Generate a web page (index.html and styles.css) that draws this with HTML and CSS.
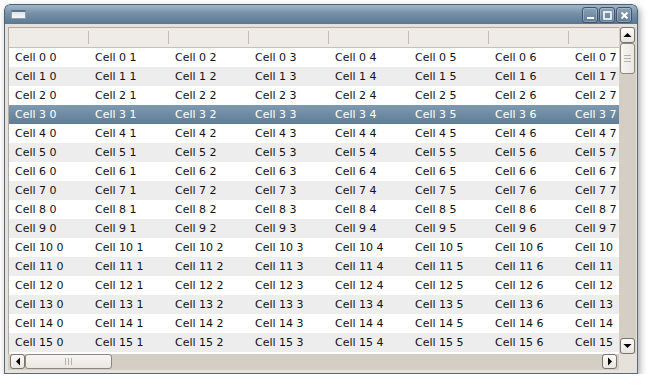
FILE: index.html
```html
<!DOCTYPE html>
<html lang="en">
<head>
  <meta charset="UTF-8" />
  <title>Table</title>
  <link rel="stylesheet" href="styles.css">
</head>
<body>

  <div class="window">
    <!-- Title bar -->
    <div class="titlebar">
      <div class="app-icon"></div>
      <div class="title-buttons">
        <div class="tbtn">
          <svg width="13" height="13" viewBox="0 0 13 13"><rect x="3" y="8" width="7" height="2" fill="#fff"/></svg>
        </div>
        <div class="tbtn">
          <svg width="13" height="13" viewBox="0 0 13 13"><rect x="3" y="3" width="7" height="7" fill="none" stroke="#fff" stroke-width="1.6"/></svg>
        </div>
        <div class="tbtn">
          <svg width="13" height="13" viewBox="0 0 13 13"><path d="M3.5 3.5 L9.5 9.5 M9.5 3.5 L3.5 9.5" stroke="#fff" stroke-width="2"/></svg>
        </div>
      </div>
    </div>

    <!-- Body -->
    <div class="frame">
      <div class="view">
        <div class="header">
          <div class="hcell"></div><div class="hcell"></div><div class="hcell"></div><div class="hcell"></div>
          <div class="hcell"></div><div class="hcell"></div><div class="hcell"></div><div class="hcell"></div>
        </div>
        <div class="rows" id="rows"></div>
      </div>

      <div class="vscroll">
        <div class="sbtn"><svg width="9" height="6" viewBox="0 0 9 6"><path d="M0.5 5 L4.5 1 L8.5 5 Z" fill="#000"/></svg></div>
        <div class="vtrack">
          <div class="vthumb"><span></span><span></span><span></span></div>
        </div>
        <div class="sbtn"><svg width="9" height="6" viewBox="0 0 9 6"><path d="M0.5 1 L4.5 5 L8.5 1 Z" fill="#000"/></svg></div>
      </div>

      <div class="hscroll">
        <div class="sbtn"><svg width="6" height="9" viewBox="0 0 6 9"><path d="M5 0.5 L1 4.5 L5 8.5 Z" fill="#000"/></svg></div>
        <div class="htrack">
          <div class="hthumb"><span></span><span></span><span></span></div>
        </div>
        <div class="sbtn"><svg width="6" height="9" viewBox="0 0 6 9"><path d="M1 0.5 L5 4.5 L1 8.5 Z" fill="#000"/></svg></div>
      </div>

      <div class="corner"></div>
    </div>
  </div>

  <script>
    // isi tabel: 16 baris x 8 kolom
    const rows = document.getElementById('rows');
    for (let r = 0; r < 16; r++) {
      let html = '<div class="row' + (r === 3 ? ' selected' : '') + '">';
      for (let c = 0; c < 8; c++) {
        html += '<div class="cell">Cell ' + r + ' ' + c + '</div>';
      }
      rows.innerHTML += html + '</div>';
    }
  </script>

</body>
</html>
```

FILE: styles.css
```css
* {
  box-sizing: border-box;
}

body {
  margin: 0;
  background: #fff;
  font-family: 'DejaVu Sans', sans-serif;
  font-size: 11px;
  color: #111;
}

.window {
  margin: 4px 0 0 4px;
  width: 634px;
  height: 370px;
  border-radius: 6px 6px 0 0;
  box-shadow: 2px 3px 7px rgba(0, 0, 0, 0.35);
  display: flex;
  flex-direction: column;
  overflow: hidden;
}

.titlebar {
  height: 20px;
  flex: none;
  display: flex;
  align-items: center;
  justify-content: space-between;
  padding: 0 5px 0 6px;
  background: linear-gradient(#a3b6c8, #7590a8 45%, #5b7893);
  border: 1px solid #4c6279;
  border-bottom: none;
  border-radius: 6px 6px 0 0;
}

.app-icon {
  width: 15px;
  height: 9px;
  background: linear-gradient(#dfe4ea, #f7f7f7);
  border: 1px solid #8c9cac;
  border-top: 2px solid #5d738a;
}

.title-buttons {
  display: flex;
  gap: 1px;
  margin-top: 1px;
}

.tbtn {
  width: 16px;
  height: 16px;
  border: 1px solid #3f556c;
  border-radius: 3px;
  background: linear-gradient(#8aa1b6, #5f7c96);
  box-shadow: inset 0 0 0 1px rgba(255, 255, 255, 0.25);
  display: flex;
  align-items: center;
  justify-content: center;
}

.frame {
  flex: 1;
  display: grid;
  grid-template-columns: 1fr 17px;
  grid-template-rows: 1fr 16px;
  padding: 3px 1px 3px 3px;
  background: #e6e1db;
  border: 1px solid #5a6a7a;
  border-top: none;
  min-height: 0;
}

.view {
  overflow: hidden;
  background: #fff;
  border-left: 1px solid #b4aba0;
  border-top: 1px solid #b4aba0;
  min-height: 0;
}

.header {
  display: flex;
  height: 20px;
  background: #efebe7;
  border-bottom: 1px solid #c9bfb3;
}

.hcell {
  flex: none;
  width: 80px;
  margin: 3px 0;
  border-right: 1px solid #c9bcad;
}

.row {
  display: flex;
  height: 19px;
  overflow: hidden;
}

.row:nth-child(even) {
  background: #ededed;
}

.row.selected {
  background: linear-gradient(#7f99ae, #5f7d97);
  color: #fff;
}

.cell {
  flex: none;
  width: 80px;
  height: 19px;
  line-height: 19px;
  padding-left: 6px;
  white-space: nowrap;
}

/* kolom terakhir terpotong oleh scrollbar, teks dibungkus */
.cell:last-child {
  width: 51px;
  white-space: normal;
  overflow: hidden;
}

/* scrollbars */
.vscroll {
  display: flex;
  flex-direction: column;
  background: #d5cec5;
  padding: 0 1px;
  grid-row: 1;
  grid-column: 2;
}

.hscroll {
  display: flex;
  background: #d5cec5;
  padding: 0 2px;
  grid-row: 2;
  grid-column: 1;
}

.sbtn {
  flex: none;
  width: 15px;
  height: 16px;
  border: 1px solid #7a746d;
  border-radius: 3px;
  background: linear-gradient(#fbfaf9, #e9e5e0);
  display: flex;
  align-items: center;
  justify-content: center;
}

.hscroll .sbtn {
  height: 15px;
}

.vtrack {
  flex: 1;
}

.vthumb {
  height: 31px;
  border: 1px solid #8e877f;
  border-radius: 3px;
  background: linear-gradient(90deg, #f7f5f3, #ebe7e2);
  display: flex;
  flex-direction: column;
  align-items: center;
  justify-content: center;
  gap: 2px;
}

.vthumb span {
  width: 7px;
  height: 1px;
  background: #b9b1a7;
}

.htrack {
  flex: 1;
}

.hthumb {
  width: 87px;
  height: 15px;
  border: 1px solid #8e877f;
  border-radius: 3px;
  background: linear-gradient(#f7f5f3, #ebe7e2);
  display: flex;
  align-items: center;
  justify-content: center;
  gap: 2px;
}

.hthumb span {
  width: 1px;
  height: 7px;
  background: #b9b1a7;
}

.corner {
  background: #e6e1db;
}
```
